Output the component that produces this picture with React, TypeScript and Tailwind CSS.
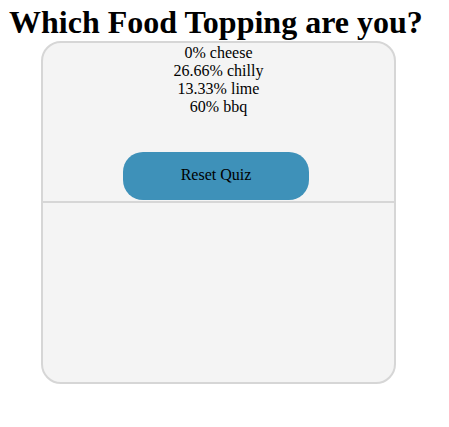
export default function App() {
  return (
    <div className="w-[449px] h-[427px] bg-white text-black" style={{ fontFamily: '"Liberation Serif", "Times New Roman", serif' }}>
      <h1 className="ml-[9px] pt-[4px] text-[32px] font-bold leading-[37px] whitespace-nowrap">Which Food Topping are you?</h1>
      <div className="ml-[41px] w-[355px] h-[343px] border-2 border-[#d6d6d6] rounded-[20px] bg-[#f4f4f4] flex flex-col">
        <div className="h-[160px] flex flex-col border-b-2 border-[#d6d6d6]">
          <div className="pt-[1px] text-[16px] leading-[18px] text-center">
            <div>0% cheese</div>
            <div>26.66% chilly</div>
            <div>13.33% lime</div>
            <div>60% bbq</div>
          </div>
          <button className="mt-auto mb-[1px] ml-[80px] w-[186px] h-[48px] pb-[3px] rounded-[20px] bg-[#3e91b9] text-[16px] text-black flex items-center justify-center">
            Reset Quiz
          </button>
        </div>
        <div className="flex-1" />
      </div>
    </div>
  );
}
